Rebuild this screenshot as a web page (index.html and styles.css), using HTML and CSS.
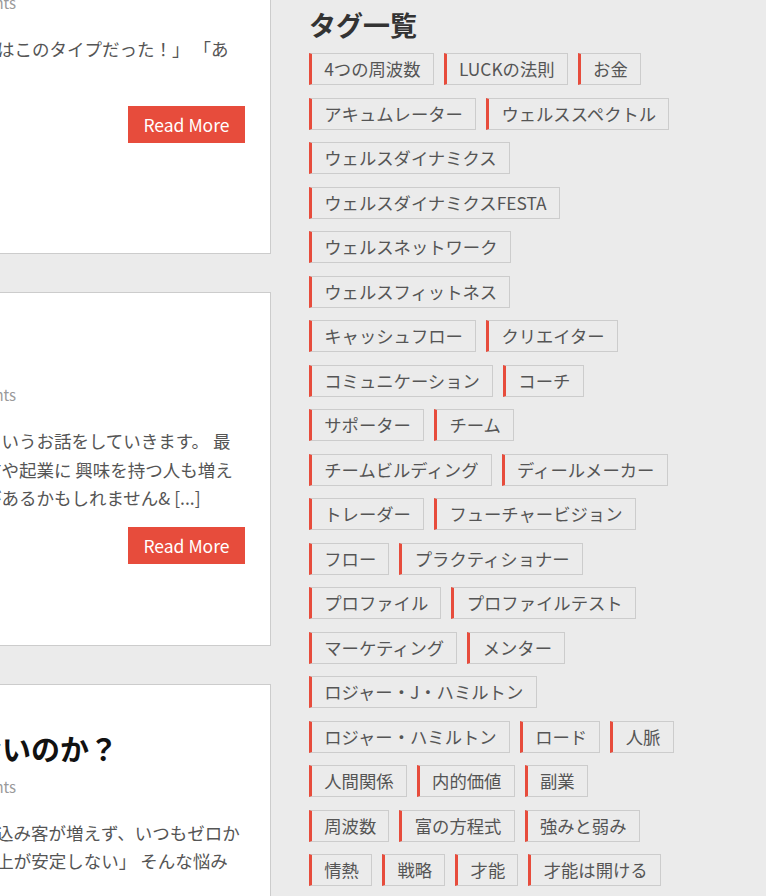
FILE: index.html
```html
<!DOCTYPE html>
<html lang="ja">
<head>
<meta charset="utf-8">
<title>タグ一覧</title>
<link rel="stylesheet" href="styles.css">
</head>
<body>
<div class="page">
  <main class="posts">
    <article class="card card--first">
      <h2 class="card-title">私のタイプ診断</h2>
      <div class="card-meta">2021年5月2日｜キャッシュフロー｜0 Comments</div>
      <p class="card-excerpt">「ウェルスダイナミクスで見ると実は私はこのタイプだった！」 「あ<br>るある！」と感じるはず。</p>
      <div class="card-actions"><a class="btn-more" href="#">Read More</a></div>
    </article>
    <article class="card">
      <h2 class="card-title">才能の見つけ方</h2>
      <div class="card-meta">2021年5月1日｜キャッシュフロー｜0 Comments</div>
      <p class="card-excerpt">今回は、「才能を活かして稼ぐ方法」 というお話をしていきます。 最<br>近は、会社員のままでも、 新しい働き方や起業に 興味を持つ人も増え<br>てきました。 そんな方にも良いヒントがあるかもしれません&amp; [...]</p>
      <div class="card-actions"><a class="btn-more" href="#">Read More</a></div>
    </article>
    <article class="card">
      <h2 class="card-title">なぜ集客がうまくいかないのか？</h2>
      <div class="card-meta">2021年4月3日｜キャッシュフロー｜0 Comments</div>
      <p class="card-excerpt">「毎月がんばって集客しているのに、見込み客が増えず、いつもゼロか<br>から抜け出せない」「いつになっても売上が安定しない」 そんな悩み<br>を抱えていませんか？</p>
    </article>
  </main>
  <aside class="sidebar">
    <h3 class="widget-title">タグ一覧</h3>
    <div class="tag-cloud">
      <a class="tag" href="#">4つの周波数</a>
      <a class="tag" href="#">LUCKの法則</a>
      <a class="tag" href="#">お金</a>
      <a class="tag" href="#">アキュムレーター</a>
      <a class="tag" href="#">ウェルススペクトル</a>
      <a class="tag" href="#">ウェルスダイナミクス</a>
      <a class="tag" href="#">ウェルスダイナミクスFESTA</a>
      <a class="tag" href="#">ウェルスネットワーク</a>
      <a class="tag" href="#">ウェルスフィットネス</a>
      <a class="tag" href="#">キャッシュフロー</a>
      <a class="tag" href="#">クリエイター</a>
      <a class="tag" href="#">コミュニケーション</a>
      <a class="tag" href="#">コーチ</a>
      <a class="tag" href="#">サポーター</a>
      <a class="tag" href="#">チーム</a>
      <a class="tag" href="#">チームビルディング</a>
      <a class="tag" href="#">ディールメーカー</a>
      <a class="tag" href="#">トレーダー</a>
      <a class="tag" href="#">フューチャービジョン</a>
      <a class="tag" href="#">フロー</a>
      <a class="tag" href="#">プラクティショナー</a>
      <a class="tag" href="#">プロファイル</a>
      <a class="tag" href="#">プロファイルテスト</a>
      <a class="tag" href="#">マーケティング</a>
      <a class="tag" href="#">メンター</a>
      <a class="tag" href="#">ロジャー・J・ハミルトン</a>
      <a class="tag" href="#">ロジャー・ハミルトン</a>
      <a class="tag" href="#">ロード</a>
      <a class="tag" href="#">人脈</a>
      <a class="tag" href="#">人間関係</a>
      <a class="tag" href="#">内的価値</a>
      <a class="tag" href="#">副業</a>
      <a class="tag" href="#">周波数</a>
      <a class="tag" href="#">富の方程式</a>
      <a class="tag" href="#">強みと弱み</a>
      <a class="tag" href="#">情熱</a>
      <a class="tag" href="#">戦略</a>
      <a class="tag" href="#">才能</a>
      <a class="tag" href="#">才能は開ける</a>
    </div>
  </aside>
</div>
</body>
</html>
```
FILE: styles.css
```css
html, body {
  margin: 0;
  padding: 0;
  overflow: hidden;
  background: #ebebeb;
}

body {
  font-family: "Noto Sans CJK JP", "Noto Sans", sans-serif;
  color: #555;
  text-spacing-trim: space-all;
  font-kerning: normal;
}

.page {
  display: flex;
  align-items: flex-start;
}

.posts {
  flex: 0 0 614px;
  width: 614px;
  margin-left: -343px;
  margin-top: -100px;
  display: flex;
  flex-direction: column;
  gap: 38px;
}

.card {
  box-sizing: border-box;
  width: 614px;
  background: #fff;
  border: 1px solid #cccccc;
  padding: 43px 25px 81px;
}

.card--first {
  padding-bottom: 110px;
}

.card-title {
  margin: 0;
  font-size: 29px;
  line-height: 40px;
  font-weight: 700;
  color: #111;
  white-space: nowrap;
}

.card-meta {
  margin-top: 7px;
  font-size: 15px;
  line-height: 24px;
  color: #9a9a9a;
  white-space: nowrap;
}

.card-excerpt {
  margin: 20px 0 0;
  font-size: 17.5px;
  line-height: 28.5px;
  color: #555;
  white-space: nowrap;
}

.card-actions {
  margin-top: 14px;
  text-align: right;
}

.btn-more {
  display: inline-block;
  height: 37px;
  line-height: 37px;
  padding: 0 15.5px;
  background: #e74c3c;
  color: #fff;
  font-size: 17.5px;
  text-decoration: none;
}

.sidebar {
  flex: 0 0 367px;
  width: 367px;
  margin-left: 38px;
  padding-top: 9px;
}

.widget-title {
  margin: 0 0 12px;
  font-size: 27px;
  line-height: 32px;
  font-weight: 700;
  color: #333;
}

.tag-cloud {
  display: flex;
  flex-wrap: wrap;
  column-gap: 10px;
  row-gap: 12.5px;
}

.tag {
  display: block;
  height: 32px;
  box-sizing: border-box;
  border: 1px solid #cccccc;
  border-left: 3px solid #e74c3c;
  padding: 0 12.25px;
  font-size: 17.333px;
  line-height: 30px;
  color: #555;
  text-decoration: none;
  white-space: nowrap;
}
```
